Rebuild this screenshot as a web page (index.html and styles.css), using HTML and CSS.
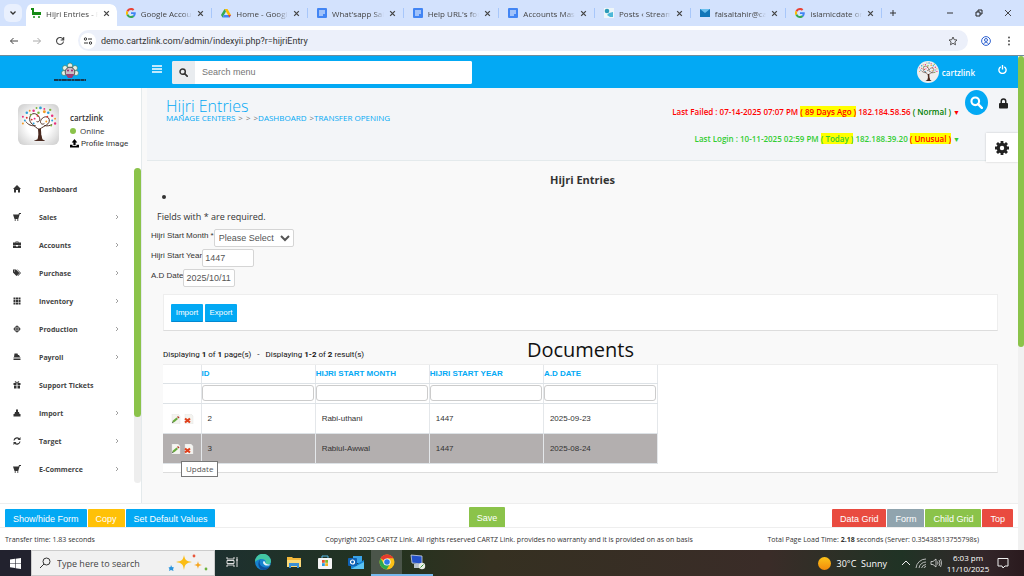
FILE: index.html
```html
<!DOCTYPE html>
<html lang="en">
<head>
    <meta charset="UTF-8">
    <meta name="viewport" content="width=device-width, initial-scale=1.0">
    <title>Hijri Entries</title>
    <link rel="stylesheet" href="styles.css">
</head>
<body>

<!-- Shared icons -->
<svg class="sprite" aria-hidden="true">
    <symbol id="google" viewBox="0 0 48 48">
        <path fill="#EA4335" d="M24 9.5c3.5 0 6.700 1.200 9.200 3.600l6.900-6.900C35.900 2.400 30.500 0 24 0 14.600 0 6.500 5.400 2.600 13.200l8 6.200C12.400 13.700 17.700 9.500 24 9.500z"/>
        <path fill="#4285F4" d="M47 24.500c0-1.600-.2-3.100-.4-4.500H24v9h12.900c-.6 3-2.200 5.500-4.700 7.200l7.700 6C44.400 38 47 31.800 47 24.500z"/>
        <path fill="#FBBC05" d="M10.500 28.600a14.500 14.500 0 0 1 0-9.200l-8-6.200a24 24 0 0 0 0 21.600z"/>
        <path fill="#34A853" d="M24 48c6.500 0 11.900-2.100 15.900-5.800l-7.700-6c-2.200 1.500-4.900 2.300-8.200 2.300-6.300 0-11.600-4.200-13.500-9.900l-8 6.200C6.500 42.600 14.600 48 24 48z"/>
    </symbol>
    <symbol id="docs" viewBox="0 0 10 10">
        <rect width="10" height="10" rx="1" fill="#4285f4"/>
        <path d="M2 3h6M2 5h6M2 7h4" stroke="#fff" stroke-width="1"/>
    </symbol>
    <symbol id="close" viewBox="0 0 6 6">
        <path d="M1 1l4 4M5 1l-4 4" stroke="#444" stroke-width="1.100"/>
    </symbol>
    <symbol id="chevron" viewBox="0 0 4 6">
        <path d="M1 1l2 2-2 2" fill="none" stroke="#888" stroke-width=".8"/>
    </symbol>
    <symbol id="cart" viewBox="0 0 16 16">
        <path d="M0 3h11l1-3h4v2h-2.500l-3 10H3z"/><circle cx="4.500" cy="14" r="1.500"/><circle cx="9.500" cy="14" r="1.500"/>
    </symbol>
    <symbol id="magnifier" viewBox="0 0 16 16">
        <circle cx="6.500" cy="6.500" r="4.700" fill="none" stroke="currentColor" stroke-width="2.600"/>
        <path d="M10 10l4.500 4.500" stroke="currentColor" stroke-width="3" stroke-linecap="round"/>
    </symbol>
    <symbol id="upload" viewBox="0 0 16 16">
        <path d="M8 0l5 6h-3v5H6V6H3zM0 10h4.500v2.500h7V10H16v5H0z"/>
    </symbol>
    <symbol id="tree" viewBox="0 0 42 42">
        <g fill="none" stroke="#4a2a20">
            <path d="M22 37c1-5 0-8 0-12" stroke-width="3"/>
            <path d="M22 27C17 22 11 20 12 14s8-5 10 0c1 3-1 5-3 4M22 26c5-4 11-5 10-10s-8-3-9 2c0 3 3 3 4 2M18 22c-4 1-8-1-10-4M27 22c3 1 6 0 8-1" stroke-width="1"/>
        </g>
        <path d="M16 38l4-2 1-4h3l1 4 3 2z" fill="#4a2a20"/>
        <g fill="#e8327c"><circle cx="5" cy="13" r="1"/><circle cx="16" cy="7" r="1.300"/><circle cx="35" cy="12" r="1.300"/><circle cx="17" cy="15" r="1"/><circle cx="27" cy="5" r="1"/><circle cx="38" cy="20" r="1.200"/></g>
        <g fill="#2e9fd8"><circle cx="9" cy="9" r="1.300"/><circle cx="23" cy="4" r="1.400"/><circle cx="31" cy="9" r="1.300"/><circle cx="35" cy="17" r="1"/><circle cx="16" cy="20" r="1"/><circle cx="7" cy="17" r="1"/></g>
        <g fill="#f39a25"><circle cx="12" cy="7" r="1"/><circle cx="27" cy="8" r="1.500"/><circle cx="38" cy="15" r="1"/><circle cx="29" cy="18" r="1"/><circle cx="5" cy="20" r="1"/></g>
        <g fill="#7bb53a"><circle cx="19" cy="4" r="1"/><circle cx="21" cy="9" r="1.300"/><circle cx="33" cy="6" r="1.200"/><circle cx="13" cy="11" r="1"/><circle cx="34" cy="22" r="1"/></g>
        <g fill="#d9342b"><circle cx="20" cy="12" r="1"/><circle cx="30" cy="13" r="1"/><circle cx="9" cy="14" r="1"/><circle cx="14" cy="16" r="1"/></g>
    </symbol>
    <symbol id="pencil" viewBox="0 0 10 10">
        <path d="M1 0h6l2 2v8H1z" fill="#f4f4f0" stroke="#ddd" stroke-width=".4"/>
        <path d="M1 9l1-2.500 3.500-3 1.500 1.500-3.500 3z" fill="#67a83c"/><path d="M6 3l1-1 1.500 1.500-1 1z" fill="#b0402e"/><path d="M1 9l.5-1.500 1 1z" fill="#555"/>
    </symbol>
    <symbol id="remove" viewBox="0 0 10 10">
        <path d="M1 0h6l2 2v8H1z" fill="#f4f4f0" stroke="#ddd" stroke-width=".4"/>
        <path d="M1 4.500l5 4M6 4.500l-5 4" stroke="#e0401c" stroke-width="2.200"/>
    </symbol>
</svg>

<!-- Browser tabs -->
<div class="tabstrip">
    <button class="tab-search" aria-label="Search tabs"><svg viewBox="0 0 8 6"><path d="M1.500 1.500L4 4l2.500-2.500" fill="none" stroke="#333" stroke-width="1.300"/></svg></button>
    <div class="tabs">
        <div class="tab tab-active"><svg class="favicon" viewBox="0 0 10 10"><path d="M0 0h3v4h7v3H1V2H0z" fill="#148a14"/><circle cx="3" cy="9" r="1" fill="#148a14"/><circle cx="8" cy="9" r="1" fill="#148a14"/></svg><span>Hijri Entries - P</span><svg class="tab-close"><use href="#close"/></svg></div>
        <div class="tab"><svg class="favicon"><use href="#google"/></svg><span>Google Accoun</span><svg class="tab-close"><use href="#close"/></svg></div>
        <div class="tab"><svg class="favicon" viewBox="0 0 10 10"><path d="M3.500 1h3L10 7H7z" fill="#fbbc04"/><path d="M3.500 1L0 7l1.500 2.500L5 3.600z" fill="#34a853"/><path d="M3 7h7L8.500 9.500h-7z" fill="#4285f4"/><path d="M7 7h3L8.500 9.500z" fill="#ea4335"/></svg><span>Home - Google</span><svg class="tab-close"><use href="#close"/></svg></div>
        <div class="tab"><svg class="favicon"><use href="#docs"/></svg><span>What'sapp Sale</span><svg class="tab-close"><use href="#close"/></svg></div>
        <div class="tab"><svg class="favicon"><use href="#docs"/></svg><span>Help URL's for</span><svg class="tab-close"><use href="#close"/></svg></div>
        <div class="tab"><svg class="favicon"><use href="#docs"/></svg><span>Accounts Mast</span><svg class="tab-close"><use href="#close"/></svg></div>
        <div class="tab"><svg class="favicon" viewBox="0 0 10 10"><path d="M0 0h10v10H0z" fill="#eef6f8"/><circle cx="3" cy="3" r="2.300" fill="#2b9bb8"/><path d="M5 5l4-1v5H6L3 7z" fill="#4db8d8"/></svg><span>Posts ‹ Streaml</span><svg class="tab-close"><use href="#close"/></svg></div>
        <div class="tab"><svg class="favicon" viewBox="0 0 10 10"><path d="M0 1h10v8H0z" fill="#1477b8"/><path d="M0 1l5 4 5-4z" fill="#6cc0ee"/></svg><span>faisaltahir@car</span><svg class="tab-close"><use href="#close"/></svg></div>
        <div class="tab"><svg class="favicon"><use href="#google"/></svg><span>islamicdate on</span><svg class="tab-close"><use href="#close"/></svg></div>
    </div>
    <div class="window-controls">
        <button aria-label="New tab"><svg viewBox="0 0 10 10"><path d="M5 2v6M2 5h6" stroke="#333"/></svg></button>
        <button class="minimize" aria-label="Minimize"><svg viewBox="0 0 10 10"><path d="M2 5h6" stroke="#333"/></svg></button>
        <button aria-label="Restore"><svg viewBox="0 0 10 10"><path d="M2 4h4v4H2zM4 4V2h4v4H6" fill="none" stroke="#222"/></svg></button>
        <button aria-label="Close"><svg viewBox="0 0 10 10"><path d="M2 2l6 6M8 2L2 8" stroke="#333" stroke-width=".9"/></svg></button>
    </div>
</div>

<div class="toolbar">
    <button aria-label="Back"><svg viewBox="0 0 10 10"><path d="M9 5H1.500M4.500 2l-3 3 3 3" fill="none" stroke="#444"/></svg></button>
    <button aria-label="Forward"><svg viewBox="0 0 10 10"><path d="M1 5h7.500M5.500 2l3 3-3 3" fill="none" stroke="#aaa"/></svg></button>
    <button aria-label="Reload"><svg viewBox="0 0 10 10"><path d="M8.200 3.500A3.500 3.500 0 1 0 8.500 5.500M8.700 1v3h-3" fill="none" stroke="#444" stroke-width="1.100"/></svg></button>
    <div class="address">
        <span class="site-info"><svg viewBox="0 0 10 10"><g fill="none" stroke="#333"><circle cx="2.500" cy="3" r="1.200"/><path d="M5 3h4M1 7h4"/><circle cx="7.500" cy="7" r="1.200"/></g></svg></span>
        <input type="text" aria-label="Address" value="demo.cartzlink.com/admin/indexyii.php?r=hijriEntry">
        <svg class="star" viewBox="0 0 10 10"><path d="M5 1l1.200 2.700 2.800.3-2.100 1.900.6 2.900L5 7.300 2.500 8.800l.6-2.900L1 4l2.800-.3z" fill="none" stroke="#444" stroke-width=".9"/></svg>
    </div>
    <button aria-label="Profile"><svg viewBox="0 0 10 10"><g fill="none" stroke="#2f62d0"><circle cx="5" cy="5" r="4.400"/><circle cx="5" cy="4" r="1.500"/><path d="M2.500 8c1-2 4-2 5 0"/></g></svg></button>
    <button aria-label="Menu"><svg viewBox="0 0 10 10"><g fill="#444"><circle cx="5" cy="1.500" r=".9"/><circle cx="5" cy="5" r=".9"/><circle cx="5" cy="8.500" r=".9"/></g></svg></button>
</div>

<div class="page">
    <div class="app">
        <header class="navbar">
            <div class="brand">
                <svg viewBox="0 0 34 21"><g fill="#e8f0e8" stroke="#375" stroke-width=".6"><circle cx="17" cy="3.500" r="2.500"/><circle cx="12" cy="6" r="2.500"/><circle cx="22" cy="6" r="2.500"/><circle cx="11" cy="11" r="2.500"/><circle cx="23" cy="11" r="2.500"/></g><circle cx="17" cy="10" r="4.800" fill="#c9bfc6" stroke="#555"/><circle cx="15" cy="8.500" r="1" fill="#a2246c"/><circle cx="19" cy="8.500" r="1" fill="#a2246c"/><path d="M13 12h8l-2 4h-4z" fill="#9c3c78"/><path d="M1 18h32" stroke="#16384e" stroke-width="2" stroke-dasharray="4 .4 3 .4 5 .4"/></svg>
            </div>
            <button class="menu-toggle" aria-label="Toggle menu"><svg viewBox="0 0 10 8"><path d="M0 1h10M0 4h10M0 7h10" stroke="#fff" stroke-width="1.500"/></svg></button>
            <label class="menu-search">
                <span><svg><use href="#magnifier"/></svg></span>
                <input type="text" aria-label="Search menu" placeholder="Search menu">
            </label>
            <a class="user" href="#"><svg><use href="#tree"/></svg>cartzlink</a>
            <button class="power" aria-label="Log out"><svg viewBox="0 0 10 10"><path d="M3 2a4 4 0 1 0 4 0M5 0v5" fill="none" stroke="#fff" stroke-width="1.500"/></svg></button>
        </header>

        <div class="layout">
            <aside class="sidebar">
                <div class="profile">
                    <svg class="profile-image"><use href="#tree"/></svg>
                    <div class="profile-info">
                        <b>cartzlink</b>
                        <span><i class="dot"></i>Online</span>
                        <a href="#"><svg><use href="#upload"/></svg>Profile Image</a>
                    </div>
                </div>
                <div class="menu-scroll">
                    <nav class="menu">
                        <a href="#"><svg viewBox="0 0 16 16"><path d="M8 0l8 8h-2v7h-4v-5H6v5H2V8H0z"/></svg>Dashboard</a>
                        <a href="#"><svg><use href="#cart"/></svg>Sales<svg class="arrow"><use href="#chevron"/></svg></a>
                        <a href="#"><svg viewBox="0 0 16 16"><path d="M5 3V1h6v2h5v5H0V3zm1.500 0h3v-.8h-3zM0 9h6v2h4V9h6v5H0z"/></svg>Accounts<svg class="arrow"><use href="#chevron"/></svg></a>
                        <a href="#"><svg viewBox="0 0 16 16"><path d="M0 1h6l7 7-6 6-7-7zM8 1h1l7 7-6 6-1-1 5-5zM3 3a1 1 0 1 0 .1 0z" fill-rule="evenodd"/></svg>Purchase<svg class="arrow"><use href="#chevron"/></svg></a>
                        <a href="#"><svg viewBox="0 0 16 16"><path d="M1 1h4v4H1zM6 1h4v4H6zM11 1h4v4h-4zM1 6h4v4H1zM6 6h4v4H6zM11 6h4v4h-4zM1 11h4v4H1zM6 11h4v4H6zM11 11h4v4h-4z"/></svg>Inventory<svg class="arrow"><use href="#chevron"/></svg></a>
                        <a href="#"><svg viewBox="0 0 16 16"><path d="M7 1h2v14H7zM1 7h14v2H1z"/><circle cx="8" cy="8" r="5" fill="none" stroke="#333" stroke-width="2"/></svg>Production<svg class="arrow"><use href="#chevron"/></svg></a>
                        <a href="#"><svg viewBox="0 0 16 16"><path d="M3 1h6l1 3h2l2 4H2zM1 9h14v2H1zM1 12h14v2H1z"/></svg>Payroll<svg class="arrow"><use href="#chevron"/></svg></a>
                        <a href="#"><svg viewBox="0 0 16 16"><path d="M1 4h6v4H1zM9 4h6v4H9zM2 9h5v6H2zM9 9h5v6H9z"/><path d="M8 4C4 4 3 1 5 1s3 3 3 3 1-3 3-3 1 3-3 3z" fill="none" stroke="#333" stroke-width="1.500"/></svg>Support Tickets</a>
                        <a href="#"><svg viewBox="0 0 16 16"><path d="M6 1h4v5h2l1 4h2v5H1v-5h2l1-4h2z"/></svg>Import<svg class="arrow"><use href="#chevron"/></svg></a>
                        <a href="#"><svg viewBox="0 0 16 16"><path d="M2 7a6 6 0 0 1 10-3.500M14 9a6 6 0 0 1-10 3.500" fill="none" stroke="#333" stroke-width="2.200"/><path d="M15 0v6H9zM1 16v-6h6z"/></svg>Target<svg class="arrow"><use href="#chevron"/></svg></a>
                        <a href="#"><svg><use href="#cart"/></svg>E-Commerce<svg class="arrow"><use href="#chevron"/></svg></a>
                    </nav>
                    <div class="menu-track"><div class="menu-thumb"></div></div>
                </div>
            </aside>

            <main class="main">
                <section class="page-header">
                    <div class="page-title">
                        <h1>Hijri Entries</h1>
                        <div class="crumbs"><a href="#">MANAGE CENTERS</a><span>&gt;</span><span>&gt;</span><span>&gt;<a href="#">DASHBOARD</a></span><span>&gt;<a href="#">TRANSFER OPENING</a></span></div>
                    </div>
                    <div class="logins">
                        <p class="failed">Last Failed : 07-14-2025 07:07 PM <mark>( 89 Days Ago )</mark> 182.184.58.56 <span class="normal">( Normal )</span> <small>▼</small></p>
                        <p class="success">Last Login : 10-11-2025 02:59 PM <mark>( Today )</mark> 182.188.39.20 <mark class="unusual">( Unusual )</mark> <small>▼</small></p>
                    </div>
                    <button class="round-search" aria-label="Search"><svg><use href="#magnifier"/></svg></button>
                    <div class="tools">
                        <button class="lock" aria-label="Lock"><svg viewBox="0 0 10 12"><path d="M2.500 6V3.500a2.500 2.500 0 0 1 5 0V6" fill="none" stroke="#222" stroke-width="1.600"/><rect y="5.500" width="10" height="6" rx="1" fill="#222"/></svg></button>
                        <button class="settings" aria-label="Settings"><svg viewBox="0 0 16 16"><circle cx="8" cy="8" r="4.300" fill="none" stroke="#222" stroke-width="3.600"/><path d="M8 0v3M8 13v3M0 8h3M13 8h3M2.300 2.300l2 2M11.700 11.700l2 2M2.300 13.700l2-2M11.700 4.300l2-2" stroke="#222" stroke-width="3.200"/></svg></button>
                    </div>
                </section>

                <section class="content">
                    <h2>Hijri Entries</h2>
                    <ul class="errors"><li></li></ul>
                    <form class="entry-form">
                        <p>Fields with * are required.</p>
                        <div class="field">
                            <label for="month">Hijri Start Month *</label>
                            <select id="month"><option>Please Select</option></select>
                        </div>
                        <div class="field">
                            <label for="year">Hijri Start Year</label>
                            <input type="text" id="year" value="1447">
                        </div>
                        <div class="field">
                            <label for="adDate">A.D Date</label>
                            <input type="text" id="adDate" value="2025/10/11">
                        </div>
                    </form>

                    <div class="card transfer">
                        <button>Import</button>
                        <button>Export</button>
                    </div>

                    <div class="grid-head">
                        <p>Displaying <b>1</b> of <b>1</b> page(s) &nbsp; - &nbsp; Displaying <b>1-2</b> of <b>2</b> result(s)</p>
                        <h3>Documents</h3>
                    </div>

                    <div class="card documents">
                        <table>
                            <thead>
                                <tr><th class="actions"></th><th><a href="#">ID</a></th><th><a href="#">HIJRI START MONTH</a></th><th><a href="#">HIJRI START YEAR</a></th><th><a href="#">A.D DATE</a></th></tr>
                                <tr class="filters"><td></td><td><input type="text" aria-label="ID"></td><td><input type="text" aria-label="Hijri start month"></td><td><input type="text" aria-label="Hijri start year"></td><td><input type="text" aria-label="A.D date"></td></tr>
                            </thead>
                            <tbody>
                                <tr>
                                    <td class="actions"><a href="#" aria-label="Update"><svg><use href="#pencil"/></svg></a><a href="#" aria-label="Delete"><svg><use href="#remove"/></svg></a></td>
                                    <td>2</td><td>Rabi-uthani</td><td>1447</td><td>2025-09-23</td>
                                </tr>
                                <tr class="hovered">
                                    <td class="actions"><a href="#" aria-label="Update"><svg><use href="#pencil"/></svg></a><a href="#" aria-label="Delete"><svg><use href="#remove"/></svg></a><span class="tooltip">Update</span></td>
                                    <td>3</td><td>Rabiul-Awwal</td><td>1447</td><td>2025-08-24</td>
                                </tr>
                            </tbody>
                        </table>
                    </div>
                </section>
            </main>
        </div>

        <div class="action-bar">
            <div class="action-group">
                <button>Show/hide Form</button>
                <button class="yellow">Copy</button>
                <button>Set Default Values</button>
            </div>
            <button class="green save">Save</button>
            <div class="action-group right">
                <button class="red">Data Grid</button>
                <button class="grey">Form</button>
                <button class="green">Child Grid</button>
                <button class="red">Top</button>
            </div>
        </div>

        <footer class="footer">
            <span>Transfer time: 1.83 seconds</span>
            <span>Copyright 2025 CARTZ Link. All rights reserved CARTZ Link. provides no warranty and it is provided on as on basis</span>
            <span>Total Page Load Time: <b>2.18</b> seconds (Server: 0.35438513755798s)</span>
        </footer>
    </div>
    <div class="page-track"><div class="page-thumb"></div></div>
</div>

<!-- Windows taskbar -->
<div class="taskbar">
    <button class="start" aria-label="Start"><svg viewBox="0 0 11 11"><path d="M0 1.500l5-.7V5H0zM5.600.7L11 0v5H5.600zM0 5.600h5v4.300l-5-.7zM5.600 5.600H11V11l-5.400-.8z" fill="#fff"/></svg></button>
    <label class="task-search">
        <svg class="glass" viewBox="0 0 12 12"><circle cx="7.500" cy="4.500" r="3.500" fill="none" stroke="#333"/><path d="M5 7l-4 4" stroke="#333"/></svg>
        <input type="text" aria-label="Type here to search" placeholder="Type here to search">
        <svg class="sparkles" viewBox="0 0 40 18"><path d="M16 1c1 5 2 6 8 7-6 1-7 2-8 8-1-6-2-7-8-8 6-1 7-2 8-7z" fill="#fbbd14"/><path d="M30 7c.5 3 1 3.500 4 4-3 .5-3.500 1-4 4-.5-3-1-3.500-4-4 3-.5 3.500-1 4-4z" fill="#f6a623"/><path d="M3 11l1 2 2 .5-1 1.500.5 2-2.500-1-2 1 .5-2-1-1.500 2-.5z" fill="#2a94dd"/><circle cx="26" cy="2" r="1.400" fill="#e8573b"/><circle cx="38" cy="15" r="1.400" fill="#6cb33f"/></svg>
    </label>
    <div class="task-apps">
        <button aria-label="Task view"><svg viewBox="0 0 16 16"><path d="M3 3v2h7V3M3 13v-2h7v2M3 6.500h7v3H3zM13 3v10M12 6h2" fill="none" stroke="#ddd"/></svg></button>
        <button aria-label="Edge"><svg viewBox="0 0 16 16"><circle cx="8" cy="8" r="8" fill="#1782cf"/><path d="M0 8a8 8 0 0 1 16-.5c0 3-5 4-6 2 2-3-1-5-4-4.500S1 6.500 0 8z" fill="#43c7a3"/><path d="M6 5c-3 3-1 8 4 8.500 2 .2 4-.5 5-1.500A8 8 0 0 1 6 15.500C3 13 2 8 6 5z" fill="#0c4f9c"/><path d="M8 8c0 3 3 4 6 3.500l1.500-1.200C13 11 10 10 10 8c0-1-2-1-2 0z" fill="#e4f4fa"/></svg></button>
        <button aria-label="Files"><svg viewBox="0 0 16 16"><path d="M1 3h5l1 1h8v9H1z" fill="#f3b93c"/><path d="M1 6h14v7H1z" fill="#fcd978"/><path d="M3 9h10v5h-2v-2H5v2H3z" fill="#3b8fd6"/></svg></button>
        <button aria-label="Store"><svg viewBox="0 0 16 16"><path d="M5 4V2h6v2" fill="none" stroke="#58b9e6"/><rect x="1" y="4" width="14" height="11" rx="1" fill="#f5f5f5"/><path d="M5 6h2.800v2.800H5z" fill="#e8502c"/><path d="M8.200 6H11v2.800H8.200z" fill="#7db82c"/><path d="M5 9.200h2.800V12H5z" fill="#2b9de0"/><path d="M8.200 9.200H11V12H8.200z" fill="#f4b51e"/></svg></button>
        <button aria-label="Outlook"><svg viewBox="0 0 16 16"><path d="M5 2h9v7H5z" fill="#3aa4e8"/><path d="M3 6l6 4 7-4v9H3z" fill="#1583d2"/><path d="M3 15l13-7v7z" fill="#5cc4f2"/><rect y="4" width="9" height="8" rx="1" fill="#0f62b5"/><circle cx="4.500" cy="8" r="2" fill="none" stroke="#fff" stroke-width="1.200"/></svg></button>
        <button class="running current" aria-label="Chrome"><svg viewBox="0 0 16 16"><circle cx="8" cy="8" r="7.500" fill="#fbc116"/><path d="M8 8L1.500 4.300A7.500 7.500 0 0 1 14.500 4.300H8z" fill="#e33b2e"/><path d="M1.500 4.300A7.500 7.500 0 0 0 7.600 15.500L11 9.800 4.800 9.800z" fill="#2da94f"/><circle cx="8" cy="8" r="3.600" fill="#fff"/><circle cx="8" cy="8" r="2.800" fill="#2d7be5"/></svg></button>
        <button class="running" aria-label="Remote desktop"><svg viewBox="0 0 16 16"><path d="M1 1l11 1v8L2 9z" fill="#2451c8" stroke="#cdd6e4" stroke-width=".8"/><path d="M4 10h6l2 4H4z" fill="#b9c2cc"/><circle cx="12" cy="12" r="3.200" fill="#e9eee6"/><path d="M10.500 13.500l3-3" stroke="#3b9a35"/></svg></button>
    </div>
    <div class="tray">
        <i class="sun"></i><span class="weather">30°C&nbsp; Sunny</span>
        <svg viewBox="0 0 12 12"><path d="M2 8l4-4 4 4" fill="none" stroke="#eee"/></svg>
        <svg viewBox="0 0 12 12"><path d="M1 11A10 10 0 0 1 11 2M4 11a7 7 0 0 1 7-6M6.500 11A5 5 0 0 1 11 7.500M9 11a2 2 0 0 1 2-1.500" fill="none" stroke="#ddd" stroke-width=".8"/></svg>
        <svg viewBox="0 0 12 12"><path d="M1 4.500h2L6 2v8L3 7.500H1zM7.500 4.500q1 1.500 0 3M9 3q2 3 0 6M10.500 2q2.500 4 0 8" fill="none" stroke="#ddd" stroke-width=".8"/></svg>
        <div class="clock"><span>6:03 pm</span><span>11/10/2025</span></div>
        <svg class="notify" viewBox="0 0 12 12"><path d="M1 1.500h10v7.500H8L6 11 5 9H1z" fill="none" stroke="#eee"/></svg>
    </div>
</div>

</body>
</html>
```
FILE: styles.css
```css
* {
    box-sizing: border-box;
}
body {
    margin: 0;
    height: 100vh;
    display: flex;
    flex-direction: column;
    overflow: hidden;
    font-family: "Open Sans", "Noto Sans", sans-serif;
    font-size: 8px;
    color: #333;
    background-color: #fff;
}
h1, h2, h3, p, ul {
    margin: 0;
    padding: 0;
}
a {
    color: inherit;
    text-decoration: none;
}
button {
    border: none;
    padding: 0;
    background: none;
    font-family: inherit;
    cursor: pointer;
}
input, select {
    font-family: inherit;
    min-width: 0;
}
svg {
    display: block;
    flex: none;
}
.sprite {
    display: none;
}

/* Browser tabs */
.tabstrip {
    display: flex;
    height: 26px;
    background-color: #d3e2fd;
}
.tab-search {
    display: grid;
    place-items: center;
    width: 18px;
    height: 18px;
    margin: 4px 0 0 4px;
    border-radius: 6px;
    background-color: #e9f0fe;
}
.tab-search svg {
    width: 8px;
    height: 6px;
}
.tabs {
    flex: 1;
    display: flex;
    min-width: 0;
}
.tab {
    flex: 1 1 0;
    min-width: 0;
    display: flex;
    align-items: center;
    gap: 5px;
    padding: 0 8px 0 9px;
    font-size: 8px;
    color: #444;
    background: linear-gradient(#a8c7fa, #a8c7fa) right center / 1px 10px no-repeat;
}
.tab-active {
    margin-top: 4px;
    padding: 0 7px 4px 5px;
    border-left: 4px solid transparent;
    border-radius: 9px 7px 0 0;
    background: #fff padding-box;
}
.favicon {
    width: 10px;
    height: 10px;
}
.tab span {
    flex: 1;
    overflow: hidden;
    white-space: nowrap;
    mask-image: linear-gradient(to right, #000 80%, transparent);
}
.tab-close {
    width: 7px;
    height: 7px;
}
.window-controls {
    width: 142px;
    display: flex;
    align-items: center;
    gap: 19px;
    padding-left: 6px;
}
.window-controls svg {
    width: 10px;
    height: 10px;
}
.window-controls .minimize {
    margin-left: 28px;
}

/* Browser toolbar */
.toolbar {
    display: flex;
    align-items: center;
    height: 29px;
    padding: 0 10px 0 9px;
    gap: 13px;
    background-color: #fff;
}
.toolbar button svg {
    width: 10px;
    height: 10px;
}
.address {
    flex: 1;
    display: flex;
    align-items: center;
    height: 21px;
    padding: 0 10px 0 2px;
    border-radius: 11px;
    background-color: #ecf0fa;
}
.site-info {
    display: grid;
    place-items: center;
    width: 16px;
    height: 16px;
    border-radius: 50%;
    background-color: #fff;
}
.site-info svg, .star {
    width: 10px;
    height: 10px;
}
.address input {
    flex: 1;
    border: none;
    padding: 0 5px;
    background: none;
    font-family: Roboto, sans-serif;
    font-size: 9px;
    color: #333;
}

/* Page frame */
.page {
    flex: 1;
    min-height: 0;
    display: flex;
    border-top: 1px solid #6f8c9c;
    background-color: #f9f9f9;
}
.app {
    flex: 1;
    min-width: 0;
    display: flex;
    flex-direction: column;
}
.page-track {
    width: 6px;
    background-color: #f1f1f1;
}
.page-thumb {
    height: 59%;
    border-radius: 3px;
    background-color: #8bc34a;
}
.navbar {
    display: flex;
    align-items: center;
    height: 32px;
    background-color: #03a9f4;
    color: #fff;
}
.brand {
    width: 139px;
    display: flex;
    justify-content: center;
}
.brand svg {
    width: 34px;
    height: 21px;
}
.menu-toggle {
    margin: 0 10px 6px 13px;
}
.menu-toggle svg {
    width: 10px;
    height: 8px;
}
.menu-search {
    display: flex;
    width: 300px;
    height: 23px;
    border-radius: 2px;
    overflow: hidden;
    background-color: #fff;
}
.menu-search span {
    display: grid;
    place-items: center;
    width: 23px;
    background-color: #e9ecef;
    color: #333;
}
.menu-search svg {
    width: 9px;
    height: 9px;
}
.menu-search input {
    flex: 1;
    border: none;
    padding: 0 7px;
    font-family: "Liberation Sans", Arial, sans-serif;
    font-size: 9px;
}
.user {
    display: flex;
    align-items: center;
    gap: 3px;
    margin-left: auto;
    font-weight: 600;
}
.user svg {
    width: 22px;
    height: 22px;
    border-radius: 50%;
    background-color: #eee;
}
.power {
    margin: 0 11px 5px 23px;
}
.power svg {
    width: 9px;
    height: 9px;
}
.layout {
    flex: 1;
    min-height: 0;
    display: flex;
}

/* Sidebar */
.sidebar {
    width: 142px;
    display: flex;
    flex-direction: column;
    padding-bottom: 20px;
    border-right: 1px solid #e4eaec;
    background-color: #fff;
}
.profile {
    display: flex;
    gap: 11px;
    height: 80px;
    padding: 16px 0 0 18px;
}
.profile-image {
    width: 41px;
    height: 41px;
    border-radius: 6px;
    background: radial-gradient(#fff 40%, #c9c9c9);
}
.profile-info {
    display: flex;
    flex-direction: column;
    padding-top: 7px;
    line-height: 13px;
}
.profile-info b {
    font-weight: 600;
}
.profile-info span, .profile-info a {
    display: flex;
    align-items: center;
    gap: 4px;
}
.profile-info a {
    gap: 2px;
    font-family: Roboto, sans-serif;
}
.profile-info svg {
    width: 9px;
    height: 9px;
}
.dot {
    width: 6px;
    height: 6px;
    border-radius: 50%;
    background-color: #8bc34a;
}
.menu-scroll {
    flex: 1;
    display: flex;
}
.menu {
    flex: 1;
    display: flex;
    flex-direction: column;
    padding: 7px 15px 0 13px;
}
.menu a {
    flex: 1;
    display: flex;
    align-items: center;
    gap: 18px;
    font-size: 7px;
    font-weight: 700;
    color: #444;
}
.menu svg {
    width: 8px;
    height: 8px;
    fill: #333;
}
.menu .arrow {
    width: 4px;
    height: 6px;
    margin-left: auto;
}
.menu-track {
    width: 7px;
    border-radius: 4px;
    background-color: #eee;
}
.menu-thumb {
    height: 79%;
    border-radius: 4px;
    background-color: #8bc34a;
}

/* Page header */
.main {
    flex: 1;
    min-width: 0;
    display: flex;
    flex-direction: column;
    padding-left: 5px;
}
.page-header {
    display: flex;
    height: 73px;
    padding-left: 19px;
    border-bottom: 1px solid #e4eaec;
    background-color: #f3f5f8;
}
.page-title {
    padding-top: 9px;
    color: #03a9f4;
}
.page-title h1 {
    font-size: 16px;
    font-weight: 300;
    line-height: 18px;
}
.crumbs {
    display: flex;
    gap: 3px;
    line-height: 6px;
}
.crumbs span {
    color: #777;
}
.crumbs a {
    color: #03a9f4;
}
.logins {
    margin-left: auto;
    padding-top: 18px;
    text-align: right;
    font-size: 8px;
    font-weight: 600;
    line-height: 12px;
}
.logins p {
    margin-bottom: 14px;
}
.logins small {
    font-size: 7px;
}
.failed {
    color: #f00;
}
.success {
    color: #32cd32;
}
.logins mark {
    color: inherit;
    background-color: #ff0;
}
.logins .unusual {
    color: #f00;
}
.normal {
    color: #008000;
}
.round-search {
    display: grid;
    place-items: center;
    width: 23px;
    height: 25px;
    margin: 2px -2px 0 5px;
    border-radius: 50%;
    background-color: #03a9f4;
    color: #fff;
}
.round-search svg {
    width: 13px;
    height: 13px;
}
.tools {
    display: flex;
    flex-direction: column;
    align-items: flex-end;
}
.lock {
    margin: 10px 10px 0 0;
}
.lock svg {
    width: 9px;
    height: 11px;
}
.settings {
    display: grid;
    place-items: center;
    width: 32px;
    height: 29px;
    flex: none;
    margin-top: 24px;
    background-color: #fff;
    box-shadow: 0 0 2px rgba(0, 0, 0, 0.2);
}
.settings svg {
    width: 14px;
    height: 14px;
}

/* Content */
.content {
    padding: 11px 20px 0 16px;
}
.content h2 {
    padding-left: 4px;
    text-align: center;
    font-size: 11px;
    line-height: 16px;
}
.errors {
    height: 16px;
    margin-left: -4px;
    padding: 1px 0 0 3px;
    font-size: 10px;
    line-height: 14px;
    list-style-position: inside;
}
.entry-form {
    margin-left: -12px;
    padding-top: 4px;
}
.entry-form p {
    padding: 2px 0 5px 6px;
    font-size: 9px;
    line-height: 14px;
}
.field {
    display: flex;
    height: 20px;
    align-items: flex-start;
    font-family: "Liberation Sans", Arial, sans-serif;
}
.field label {
    font-size: 8px;
    line-height: 13px;
}
.field input, .field select {
    width: 52px;
    height: 18px;
    padding: 0 2px;
    border: 1px solid #d5d5d5;
    border-radius: 2px;
    background-color: #fff;
    font-size: 9px;
    color: #555;
}
.field select {
    width: 80px;
    padding: 0;
}
.card {
    border: 1px solid #eee;
    border-bottom-color: #ddd;
    background-color: #fff;
}
.transfer {
    display: flex;
    align-items: center;
    gap: 2px;
    height: 37px;
    margin-top: 5px;
    padding-left: 7px;
}
.transfer button {
    width: 32px;
    height: 18px;
    border-bottom: 1px solid #0288d1;
    border-radius: 1px;
    background-color: #03a9f4;
    font-family: "Liberation Sans", Arial, sans-serif;
    font-size: 8px;
    color: #fff;
}
.grid-head {
    display: grid;
    grid-template-columns: 1fr auto 1fr;
    align-items: end;
    height: 33px;
    color: #111;
}
.grid-head p {
    font-family: Roboto, sans-serif;
    font-size: 8px;
    line-height: 19px;
}
.grid-head h3 {
    font-size: 20px;
    font-weight: 400;
    line-height: 28px;
}
.documents {
    height: 109px;
    border-left: none;
}
table {
    width: 495px;
    border-collapse: collapse;
    table-layout: fixed;
    font-family: "Liberation Sans", Arial, sans-serif;
    font-size: 8px;
}
th, td {
    padding: 0;
    border-right: 1px solid #e4e7ea;
    border-bottom: 1px solid #dde2e6;
    text-align: left;
}
th {
    height: 18px;
    color: #03a9f4;
}
th.actions {
    width: 38px;
}
.filters td {
    height: 20px;
}
.filters input {
    display: block;
    width: 112px;
    height: 16px;
    border: 1px solid #ccc;
    border-radius: 3px;
}
tbody td {
    height: 30px;
    padding-left: 6px;
}
.hovered {
    background-color: #b3afaf;
}
tbody .actions {
    position: relative;
    padding: 4px 0 0 8px;
}
.actions a {
    display: inline-block;
    margin-right: 3px;
}
.actions svg {
    width: 10px;
    height: 10px;
}
.tooltip {
    position: absolute;
    top: 27px;
    left: 18px;
    padding: 0 4px;
    border: 1px solid #777;
    background-color: #fff;
    font-family: "Open Sans", sans-serif;
    line-height: 14px;
    color: #555;
}

/* Bottom bar */
.action-bar {
    display: grid;
    grid-template-columns: 46% auto 1fr;
    align-items: end;
    height: 24px;
    padding: 0 5px;
    border-top: 1px solid #eee;
    background-color: #fff;
}
.action-group {
    display: flex;
    gap: 1px;
}
.right {
    justify-content: flex-end;
}
.action-bar button {
    height: 18px;
    padding: 2px 8px 0;
    border-radius: 1px 1px 0 0;
    background-color: #03a9f4;
    font-family: "Liberation Sans", Arial, sans-serif;
    font-size: 9px;
    color: #fff;
}
.action-bar .save {
    height: 20px;
}
.action-bar .yellow {
    background-color: #ffc107;
}
.action-bar .green {
    background-color: #8bc34a;
}
.action-bar .red {
    background-color: #e94b40;
}
.action-bar .grey {
    background-color: #90a4ae;
}
.footer {
    display: grid;
    grid-template-columns: 1fr auto 1fr;
    align-items: center;
    height: 23px;
    padding: 0 5px;
    border-top: 1px solid #eee;
    background-color: #fff;
    font-size: 7px;
}
.footer span:last-child {
    padding-right: 34px;
    text-align: right;
}

/* Taskbar */
.taskbar {
    display: flex;
    height: 26px;
    background: linear-gradient(to right, #1d3030 20%, #23331f 38%, #353021 48%, #3a2c28 75%, #203325 88%, #33262a 96%, #2a1a1e);
    color: #fff;
}
.start {
    display: grid;
    place-items: center;
    width: 31px;
    background-color: #22222e;
}
.start svg {
    width: 11px;
    height: 11px;
}
.task-search {
    display: flex;
    align-items: center;
    width: 184px;
    padding: 0 6px 0 7px;
    border: 1px solid #ccc;
    background-color: #f1f1f1;
}
.glass {
    width: 12px;
    height: 12px;
}
.task-search input {
    flex: 1;
    border: none;
    padding: 0 6px;
    background: none;
    font-size: 9px;
}
.task-search input::placeholder {
    color: #444;
}
.sparkles {
    width: 40px;
    height: 18px;
}
.task-apps {
    display: flex;
    padding-left: 1px;
}
.task-apps button {
    display: grid;
    place-items: center;
    width: 31px;
    border-bottom: 2px solid transparent;
}
.task-apps .running {
    border-color: #76b9ed;
}
.task-apps .current {
    background-color: #4b554a;
}
.task-apps svg {
    width: 16px;
    height: 16px;
}
.tray {
    display: flex;
    align-items: center;
    gap: 3px;
    margin-left: auto;
    padding-right: 15px;
}
.tray svg {
    width: 12px;
    height: 12px;
}
.sun {
    width: 13px;
    height: 13px;
    border-radius: 50%;
    background: linear-gradient(#fcc419, #f28a0c);
}
.weather {
    margin: 0 10px 0 3px;
    font-size: 9px;
}
.clock {
    display: flex;
    flex-direction: column;
    width: 46px;
    text-align: center;
    line-height: 11px;
}
.tray .notify {
    margin-left: 3px;
}
```
